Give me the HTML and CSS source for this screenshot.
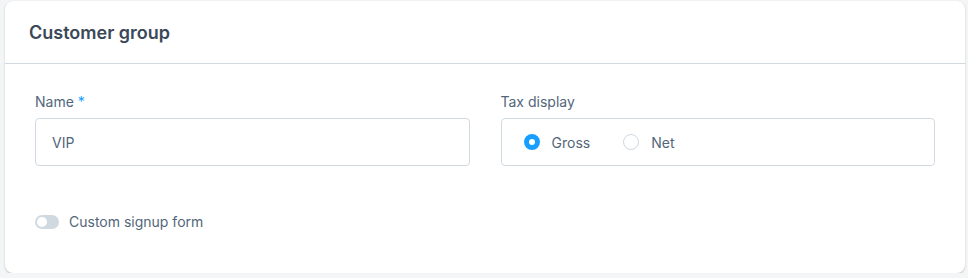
FILE: index.html
```html
<!DOCTYPE html>
<html>
<head>
<meta charset="utf-8">
<link rel="stylesheet" href="styles.css">
</head>
<body>
<div class="card">
  <div class="card-header">
    <h2 class="card-title">Customer group</h2>
  </div>
  <div class="card-body">
    <div class="field-row">
      <div class="field">
        <label class="field-label">Name <span class="req">*</span></label>
        <div class="input">VIP</div>
      </div>
      <div class="field">
        <label class="field-label">Tax display</label>
        <div class="input radio-group">
          <div class="radio-option">
            <span class="radio checked"></span>
            <span class="radio-label">Gross</span>
          </div>
          <div class="radio-option">
            <span class="radio"></span>
            <span class="radio-label">Net</span>
          </div>
        </div>
      </div>
    </div>
    <div class="switch-row">
      <span class="switch"><span class="knob"></span></span>
      <span class="switch-label">Custom signup form</span>
    </div>
  </div>
</div>
</body>
</html>
```

FILE: styles.css
```css
html, body {
  margin: 0;
  padding: 0;
}
body {
  background: #f4f5f7;
  padding: 1px 3px 0 5px;
  font-family: Inter, "Noto Sans", sans-serif;
  color: #52667a;
}
.card {
  background: #fff;
  border-radius: 8px;
  box-shadow: 0 1px 2px rgba(0,0,0,0.2), 0 0 1px rgba(0,0,0,0.08);
  height: 272px;
  box-sizing: border-box;
}
.card-header {
  height: 62px;
  border-bottom: 1px solid #d1d9e0;
  display: flex;
  align-items: center;
  padding: 0 24px;
}
.card-title {
  margin: 0;
  font-size: 18px;
  font-weight: 600;
  color: #3a4858;
}
.card-body {
  padding: 30px 30px 0 30px;
}
.field-row {
  display: grid;
  grid-template-columns: 1fr 1fr;
  column-gap: 31px;
}
.field {
  display: flex;
  flex-direction: column;
}
.field-label {
  font-size: 14px;
  line-height: 16px;
  margin-bottom: 8px;
  color: #52667a;
}
.req {
  color: #189eff;
}
.input {
  height: 48px;
  box-sizing: border-box;
  border: 1px solid #d1d9e0;
  border-radius: 4px;
  padding: 0 16px;
  display: flex;
  align-items: center;
  font-size: 14px;
  color: #52667a;
}
.radio-group {
  padding: 0 22px;
  gap: 33px;
}
.radio-option {
  display: flex;
  align-items: center;
  gap: 12px;
}
.radio {
  width: 16px;
  height: 16px;
  box-sizing: border-box;
  border: 1px solid #d1d9e0;
  border-radius: 50%;
  background: #fff;
}
.radio.checked {
  border: 5px solid #189eff;
}
.radio-label {
  font-size: 14px;
  color: #52667a;
}
.switch-row {
  display: flex;
  align-items: center;
  gap: 10px;
  margin-top: 46px;
}
.switch {
  width: 24px;
  height: 14px;
  border-radius: 7px;
  background: #d1d9e0;
  display: flex;
  align-items: center;
  padding: 0 2px;
  box-sizing: border-box;
}
.knob {
  width: 10px;
  height: 10px;
  border-radius: 50%;
  background: #fff;
}
.switch-label {
  font-size: 14px;
  line-height: 20px;
  color: #52667a;
}
```
